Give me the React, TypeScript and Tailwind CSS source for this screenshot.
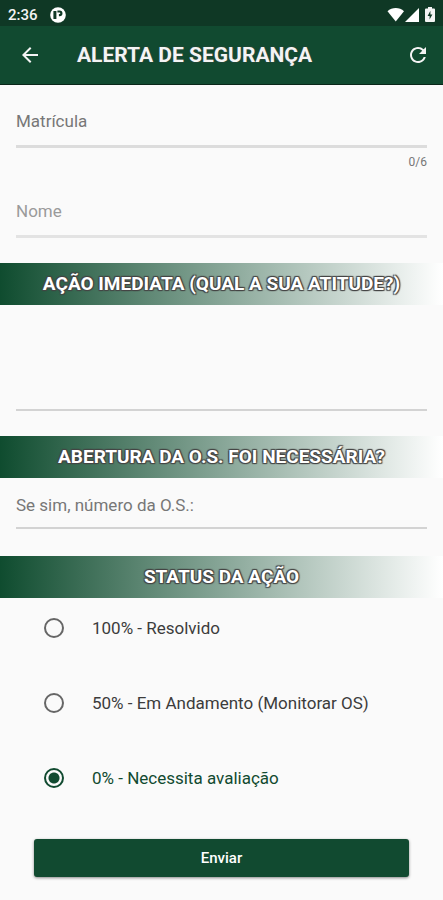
import { useState } from 'react';
import type { ReactNode } from 'react';
import { MdArrowBack, MdRefresh } from 'react-icons/md';

const STATUS_OPTIONS = [
  { value: '100', label: '100% - Resolvido' },
  { value: '50', label: '50% - Em Andamento (Monitorar OS)' },
  { value: '0', label: '0% - Necessita avaliação' },
];

function StatusBar() {
  return (
    <div className="flex h-[26px] items-center justify-between bg-[#0f3825] px-2 pt-1 text-[#f4f4f4]">
      <div className="flex items-center gap-3">
        <span className="text-[15px] leading-4 font-medium">2:36</span>
        <svg viewBox="0 0 16 16" className="size-4" aria-hidden="true">
          <circle cx="8" cy="8" r="7.8" fill="#fff" />
          <path d="M3.4 4h3v8h-3z" fill="#0f3825" />
          <path d="M7.4 3.4h2.2a2.9 2.9 0 0 1 0 5.800H8.900V7h.6a.8.8 0 0 0 0-1.600H7.400z" fill="#0f3825" />
        </svg>
      </div>
      <div className="flex items-center gap-1">
        <svg viewBox="0 0 34 16" className="h-4 w-[34px]" aria-hidden="true">
          <path d="M.5 4.200C5-.2 12.500-.2 17 4.200L8.750 14.600z" fill="#fff" />
          <path d="M32 1v14H18z" fill="#fff" />
        </svg>
        <svg viewBox="0 0 10 16" className="h-4 w-[10px]" aria-hidden="true">
          <path d="M3 0h4v1.500h2A1 1 0 0 1 10 2.500V14a1 1 0 0 1-1 1H1a1 1 0 0 1-1-1V2.500a1 1 0 0 1 1-1h2z" fill="#f4f4f4" />
          <path d="M5.400 3.800 2.600 9h2v3.600L7.400 7.400h-2z" fill="#0f3825" />
        </svg>
      </div>
    </div>
  );
}

function Banner({ id, children }: { id: string; children: ReactNode }) {
  return (
    <h2
      id={id}
      className="flex h-[42px] items-center justify-center bg-linear-to-r/srgb from-[#0f4c2f] to-white text-[19px] leading-6 font-bold text-white [text-shadow:-1px_-1px_1px_#444,1px_-1px_1px_#444,-1px_1px_1px_#444,1px_1px_1px_#444]"
    >
      {children}
    </h2>
  );
}

export default function App() {
  const [matricula, setMatricula] = useState('');
  const [status, setStatus] = useState('0');

  return (
    <div className="min-h-screen bg-[#fafafa] font-[Roboto,sans-serif] text-[#3c3c3c]">
      <StatusBar />
      <header className="flex h-[59px] items-center border-b border-[#0a2619] bg-[#114a30] pr-[13px] pl-[18px] text-[#f4f4f4]">
        <button type="button" aria-label="Voltar">
          <MdArrowBack className="size-6" />
        </button>
        <h1 className="ml-[35px] flex-1 text-[21px] leading-6 font-bold [text-shadow:0_0_2px_#444]">
          ALERTA DE SEGURANÇA
        </h1>
        <button type="button" aria-label="Atualizar">
          <MdRefresh className="size-6" />
        </button>
      </header>

      <form onSubmit={(e) => e.preventDefault()}>
        <div className="px-4 pt-3">
          <input
            type="text"
            aria-label="Matrícula"
            placeholder="Matrícula"
            maxLength={6}
            value={matricula}
            onChange={(e) => setMatricula(e.target.value)}
            className="block h-[51px] w-full border-b-3 border-[#dcdcdc] text-[17px] outline-none placeholder:text-[#777]"
          />
          <p className="mt-1.5 text-right text-xs text-[#777]">{matricula.length}/6</p>
        </div>
        <div className="px-4 pt-[17px]">
          <input
            type="text"
            aria-label="Nome"
            placeholder="Nome"
            className="block h-[51px] w-full border-b-3 border-[#e3e3e3] text-[17px] outline-none placeholder:text-[#9a9a9a]"
          />
        </div>

        <div className="pt-[25px]">
          <Banner id="acao-title">AÇÃO IMEDIATA (QUAL A SUA ATITUDE?)</Banner>
        </div>
        <div className="px-4">
          <textarea
            aria-labelledby="acao-title"
            className="block h-[106px] w-full resize-none border-b-2 border-[#d3d3d3] pt-4 text-[17px] outline-none"
          />
        </div>

        <div className="pt-[25px]">
          <Banner id="os-title">ABERTURA DA O.S. FOI NECESSÁRIA?</Banner>
        </div>
        <div className="px-4">
          <input
            type="text"
            aria-label="Se sim, número da O.S.:"
            placeholder="Se sim, número da O.S.:"
            className="block h-[51px] w-full border-b-2 border-[#d3d3d3] pt-1 text-[17px] outline-none placeholder:text-[#777]"
          />
        </div>

        <fieldset aria-labelledby="status-title" className="pt-[27px]">
          <Banner id="status-title">STATUS DA AÇÃO</Banner>
          <div className="flex flex-col gap-[15px]">
            {STATUS_OPTIONS.map((option) => (
              <label
                key={option.value}
                className="flex h-15 items-center gap-7 px-11 text-[17px] leading-6 has-checked:text-[#114a30]"
              >
                <input
                  type="radio"
                  name="status"
                  value={option.value}
                  checked={status === option.value}
                  onChange={() => setStatus(option.value)}
                  className="size-5 appearance-none rounded-full border-2 border-[#666] checked:border-[#114a30] checked:bg-[radial-gradient(circle,#114a30_5px,transparent_6px)]"
                />
                <span>{option.label}</span>
              </label>
            ))}
          </div>
        </fieldset>

        <div className="px-[34px] pt-[31px] pb-5">
          <button
            type="submit"
            className="h-[38px] w-full rounded-[3px] bg-[#114a30] text-[15px] leading-5 font-medium text-white shadow-[0_1px_3px_rgba(0,0,0,0.45)]"
          >
            Enviar
          </button>
        </div>
      </form>
    </div>
  );
}
